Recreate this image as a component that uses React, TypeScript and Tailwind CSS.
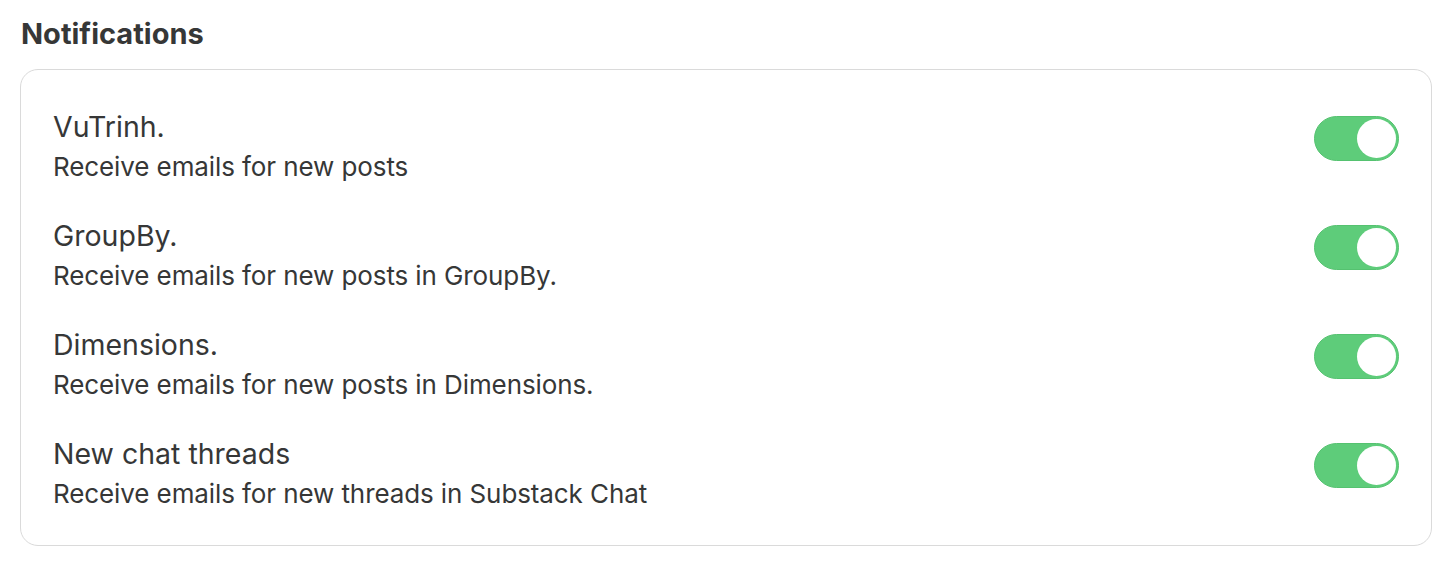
import React, { useState } from 'react'

const items = [
  { title: 'VuTrinh.', desc: 'Receive emails for new posts' },
  { title: 'GroupBy.', desc: 'Receive emails for new posts in GroupBy.' },
  { title: 'Dimensions.', desc: 'Receive emails for new posts in Dimensions.' },
  { title: 'New chat threads', desc: 'Receive emails for new threads in Substack Chat' },
]

function Toggle({ on, onClick }: { on: boolean; onClick: () => void }) {
  return (
    <button
      onClick={onClick}
      className={`relative mt-[7px] w-[85px] h-[45px] rounded-full shrink-0 border transition-colors ${on ? 'bg-[#5ecc7a] border-[#55c270]' : 'bg-[#e5e5e5] border-[#dcdcdc]'}`}
    >
      <span
        className={`absolute top-[2px] w-[39px] h-[39px] rounded-full bg-white transition-all ${on ? 'left-[42px]' : 'left-[2px]'}`}
      />
    </button>
  )
}

export default function App() {
  const [state, setState] = useState(items.map(() => true))

  return (
    <div className="w-[1456px] h-[575px] bg-white px-[20px] pt-[14px] font-['Inter',sans-serif] text-[#363737]">
      <h2 className="text-[29px] font-bold leading-[40px] pl-px">Notifications</h2>
      <div className="mt-[15px] w-[1412px] border border-[#dadada] rounded-[18px] px-[32px] pt-[39px] pb-[31px] flex flex-col gap-[31px]">
        {items.map((it, i) => (
          <div key={it.title} className="flex items-start justify-between">
            <div>
              <p className="text-[28.5px] leading-[36px] text-[#363737]">{it.title}</p>
              <p className="text-[26px] leading-[40px] mt-[2px] text-[#363737] tracking-[-0.1px]">{it.desc}</p>
            </div>
            <Toggle on={state[i]} onClick={() => setState(s => s.map((v, j) => (j === i ? !v : v)))} />
          </div>
        ))}
      </div>
    </div>
  )
}
